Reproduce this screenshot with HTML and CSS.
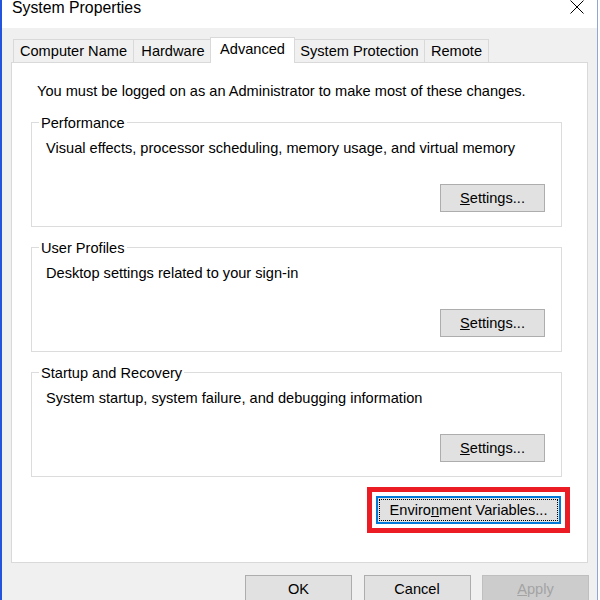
FILE: index.html
```html
<!DOCTYPE html>
<html>
<head>
<meta charset="utf-8">
<title>System Properties</title>
<link rel="stylesheet" href="styles.css">
</head>
<body>
<div class="window">
  <div class="titlebar">
    <span class="title">System Properties</span>
    <svg class="close" width="14" height="14" viewBox="0 0 14 14"><path d="M0.5 0.5 L13.5 13.5 M13.5 0.5 L0.5 13.5" stroke="#000" stroke-width="1" fill="none"/></svg>
  </div>
  <div class="body">
    <div class="tabs">
      <div class="tab t-cn">Computer Name</div>
      <div class="tab t-hw">Hardware</div>
      <div class="tab t-adv selected">Advanced</div>
      <div class="tab t-sp">System Protection</div>
      <div class="tab t-rm">Remote</div>
    </div>
    <div class="panel">
      <div class="intro">You must be logged on as an Administrator to make most of these changes.</div>
      <div class="group">
        <div class="group-title">Performance</div>
        <div class="group-desc">Visual effects, processor scheduling, memory usage, and virtual memory</div>
        <div class="group-actions"><button class="btn"><u>S</u>ettings...</button></div>
      </div>
      <div class="group">
        <div class="group-title">User Profiles</div>
        <div class="group-desc">Desktop settings related to your sign-in</div>
        <div class="group-actions"><button class="btn"><u>S</u>ettings...</button></div>
      </div>
      <div class="group">
        <div class="group-title">Startup and Recovery</div>
        <div class="group-desc">System startup, system failure, and debugging information</div>
        <div class="group-actions"><button class="btn"><u>S</u>ettings...</button></div>
      </div>
      <div class="env-row">
        <div class="highlight">
          <button class="btn btn-env">Enviro<u>n</u>ment Variables...</button>
        </div>
      </div>
    </div>
    <div class="footer">
      <button class="btn btn-foot">OK</button>
      <button class="btn btn-foot">Cancel</button>
      <button class="btn btn-foot disabled"><u>A</u>pply</button>
    </div>
  </div>
</div>
</body>
</html>
```
FILE: styles.css
```css
html, body {
  margin: 0;
  padding: 0;
  background: #ffffff;
  width: 600px;
  height: 600px;
  overflow: hidden;
}
body {
  font-family: "Liberation Sans", Arial, sans-serif;
  font-size: 14.6px;
  color: #000000;
}
.window {
  width: 598px;
  height: 600px;
  box-sizing: border-box;
  border-left: 2px solid #2454dc;
  border-right: 1px solid #93a6d0;
  display: flex;
  flex-direction: column;
  background: #f0f0f0;
}
.titlebar {
  height: 28px;
  background: #ffffff;
  display: flex;
  justify-content: space-between;
  align-items: flex-start;
  padding-left: 10px;
  padding-right: 13px;
  flex: none;
}
.title {
  font-size: 15.8px;
  line-height: 15px;
}
.close {
  display: block;
}
.body {
  padding-left: 9px;
  flex: 1;
}
.tabs {
  display: flex;
  align-items: flex-end;
  margin-top: 9px;
  margin-left: 2px;
  height: 25px;
}
.tab {
  box-sizing: border-box;
  height: 23px;
  border-top: 1px solid #d9d9d9;
  border-left: 1px solid #d9d9d9;
  line-height: 22px;
  text-align: center;
  background: #f0f0f0;
  white-space: nowrap;
}
.t-cn { width: 120px; }
.t-hw { width: 79px; }
.t-sp { width: 130px; }
.t-rm { width: 65px; border-right: 1px solid #d9d9d9; }
.tab.selected {
  width: 85px;
  height: 26px;
  margin-left: -2px;
  margin-right: -1px;
  margin-bottom: -1px;
  border-right: 1px solid #d9d9d9;
  background: #ffffff;
  padding-bottom: 3px;
  position: relative;
  z-index: 1;
}
.panel {
  box-sizing: border-box;
  width: 577px;
  height: 501px;
  border: 1px solid #d9d9d9;
  background: #ffffff;
  padding: 19px 25px 0 19px;
}
.intro {
  line-height: 18px;
  margin-left: 6px;
  white-space: nowrap;
}
.group {
  box-sizing: border-box;
  height: 105px;
  border: 1px solid #dcdcdc;
  margin-top: 20px;
}
.intro + .group {
  margin-top: 22px;
}
.group-title {
  width: fit-content;
  margin-top: -9px;
  margin-left: 7px;
  padding: 0 2px;
  line-height: 18px;
  background: #ffffff;
}
.group-desc {
  margin-top: 7px;
  margin-left: 14px;
  line-height: 18px;
  white-space: nowrap;
}
.group-actions {
  display: flex;
  justify-content: flex-end;
  margin-top: 27px;
  margin-right: 16px;
}
.btn {
  box-sizing: border-box;
  width: 105px;
  height: 28px;
  border: 1px solid #adadad;
  background: #e1e1e1;
  font-family: "Liberation Sans", Arial, sans-serif;
  font-size: 14.6px;
  line-height: 26px;
  color: #000000;
  padding: 0;
  margin: 0;
  text-align: center;
  white-space: nowrap;
}
.env-row {
  display: flex;
  justify-content: flex-end;
  margin-top: 10px;
  margin-right: -8px;
}
.highlight {
  border: 5px solid #ec1c24;
  padding: 4px;
  background: #ffffff;
  display: flex;
}
.btn-env {
  width: 185px;
  border: 2px solid #0078d7;
  line-height: 24px;
  outline: 1px dotted #000000;
  outline-offset: -4px;
}
.footer {
  display: flex;
  justify-content: flex-end;
  gap: 11.5px;
  margin-top: 12px;
  margin-right: 8px;
}
.btn-foot {
  width: 107px;
}
.btn-foot.disabled {
  background: #cccccc;
  border-color: #bfbfbf;
  color: #a3a3a3;
}
```
